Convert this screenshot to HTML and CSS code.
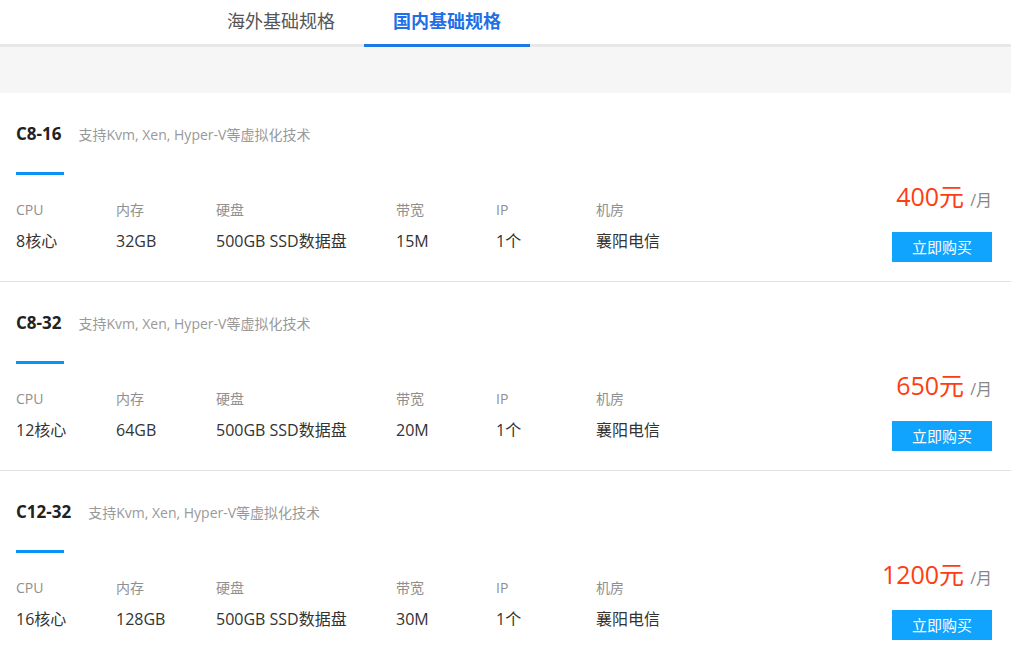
FILE: index.html
```html
<!DOCTYPE html>
<html lang="zh-CN">
<head>
<meta charset="utf-8">
<title>基础规格</title>
<link rel="stylesheet" href="styles.css">
</head>
<body>
<div class="tabs">
  <div class="tab">海外基础规格</div>
  <div class="tab active">国内基础规格</div>
</div>
<div class="gap"></div>
<div class="list">
  <div class="card">
    <div class="head"><span class="name">C8-16</span><span class="desc">支持Kvm, Xen, Hyper-V等虚拟化技术</span></div>
    <div class="bar"></div>
    <div class="row">
      <div class="specs">
        <div class="col w100"><div class="lab">CPU</div><div class="val">8核心</div></div>
        <div class="col w100"><div class="lab">内存</div><div class="val">32GB</div></div>
        <div class="col w180"><div class="lab">硬盘</div><div class="val">500GB SSD数据盘</div></div>
        <div class="col w100"><div class="lab">带宽</div><div class="val">15M</div></div>
        <div class="col w100"><div class="lab">IP</div><div class="val">1个</div></div>
        <div class="col"><div class="lab">机房</div><div class="val">襄阳电信</div></div>
      </div>
      <div class="buy">
        <div class="price"><span class="num">400元</span><span class="unit">/月</span></div>
        <div class="btn">立即购买</div>
      </div>
    </div>
  </div>
  <div class="card">
    <div class="head"><span class="name">C8-32</span><span class="desc">支持Kvm, Xen, Hyper-V等虚拟化技术</span></div>
    <div class="bar"></div>
    <div class="row">
      <div class="specs">
        <div class="col w100"><div class="lab">CPU</div><div class="val">12核心</div></div>
        <div class="col w100"><div class="lab">内存</div><div class="val">64GB</div></div>
        <div class="col w180"><div class="lab">硬盘</div><div class="val">500GB SSD数据盘</div></div>
        <div class="col w100"><div class="lab">带宽</div><div class="val">20M</div></div>
        <div class="col w100"><div class="lab">IP</div><div class="val">1个</div></div>
        <div class="col"><div class="lab">机房</div><div class="val">襄阳电信</div></div>
      </div>
      <div class="buy">
        <div class="price"><span class="num">650元</span><span class="unit">/月</span></div>
        <div class="btn">立即购买</div>
      </div>
    </div>
  </div>
  <div class="card">
    <div class="head"><span class="name">C12-32</span><span class="desc">支持Kvm, Xen, Hyper-V等虚拟化技术</span></div>
    <div class="bar"></div>
    <div class="row">
      <div class="specs">
        <div class="col w100"><div class="lab">CPU</div><div class="val">16核心</div></div>
        <div class="col w100"><div class="lab">内存</div><div class="val">128GB</div></div>
        <div class="col w180"><div class="lab">硬盘</div><div class="val">500GB SSD数据盘</div></div>
        <div class="col w100"><div class="lab">带宽</div><div class="val">30M</div></div>
        <div class="col w100"><div class="lab">IP</div><div class="val">1个</div></div>
        <div class="col"><div class="lab">机房</div><div class="val">襄阳电信</div></div>
      </div>
      <div class="buy">
        <div class="price"><span class="num">1200元</span><span class="unit">/月</span></div>
        <div class="btn">立即购买</div>
      </div>
    </div>
  </div>
</div>
</body>
</html>
```
FILE: styles.css
```css
* { box-sizing: border-box; }
html, body { margin: 0; padding: 0; background: #fff; }
body {
  font-family: "Open Sans", "Noto Sans CJK SC", sans-serif;
  color: #333;
  width: 1011px;
  overflow: hidden;
}
.tabs {
  height: 47px;
  border-bottom: 3px solid #e8e8e8;
  display: flex;
  padding-left: 198px;
}
.tab {
  width: 166px;
  height: 47px;
  margin-bottom: -3px;
  text-align: center;
  font-size: 18px;
  line-height: 40px;
  color: #555;
  font-family: "Noto Sans CJK SC", sans-serif;
}
.tab.active {
  color: #1e6fe8;
  font-weight: bold;
  border-bottom: 3px solid #1c77e8;
}
.gap { height: 46px; background: #f6f6f6; }
.card {
  height: 189px;
  border-bottom: 1px solid #e2e2e2;
  padding: 0 19px 0 16px;
}
.head {
  padding-top: 29px;
  height: 79px;
  display: flex;
  align-items: baseline;
}
.name { font-size: 17px; font-weight: bold; color: #222; margin-right: 17px; line-height: 24px; }
.desc { font-size: 14px; color: #999; line-height: 24px; }
.bar { width: 48px; height: 3px; background: #0a93f7; }
.row { display: flex; justify-content: space-between; }
.specs { display: flex; padding-top: 24px; }
.col { flex: none; }
.w100 { width: 100px; }
.w180 { width: 180px; }
.lab { font-size: 14px; color: #8f8f8f; line-height: 22px; }
.val { font-size: 16px; color: #333; line-height: 22px; margin-top: 9px; }
.buy { display: flex; flex-direction: column; align-items: flex-end; padding-top: 4px; }
.price { line-height: 34px; }
.num { font-size: 25px; color: #ff3d14; }
.unit { font-size: 16px; color: #888; margin-left: 6px; }
.btn {
  margin-top: 15px;
  width: 100px;
  height: 30px;
  background: #10a4fe;
  color: #fff;
  font-size: 15px;
  line-height: 30px;
  text-align: center;
  font-family: "Noto Sans CJK SC", sans-serif;
}
```
